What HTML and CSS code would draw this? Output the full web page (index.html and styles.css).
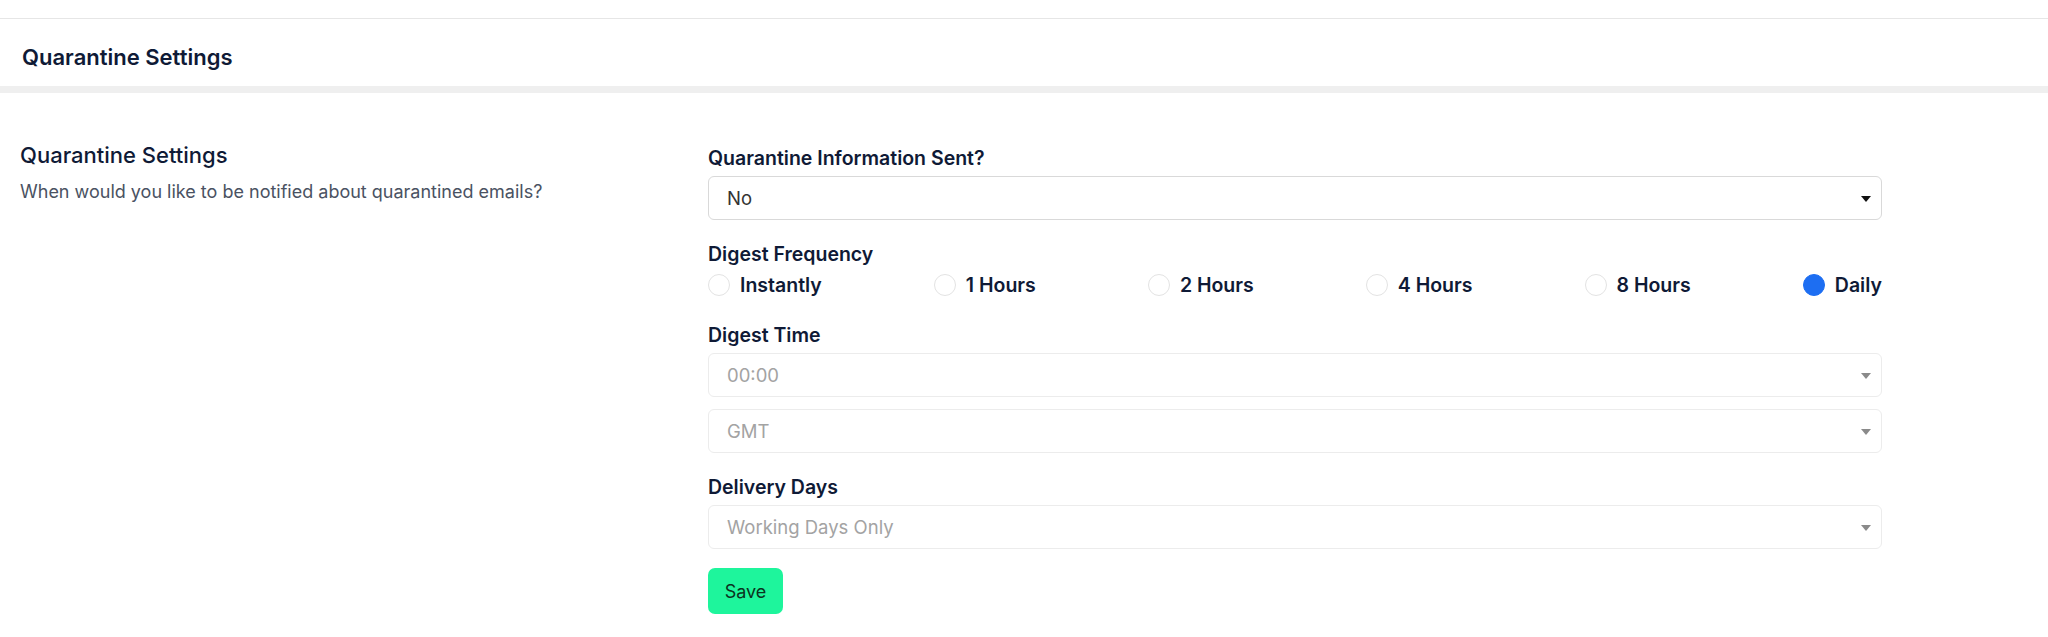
FILE: index.html
```html
<!DOCTYPE html>
<html lang="en">
<head>
  <meta charset="UTF-8" />
  <meta name="viewport" content="width=device-width, initial-scale=1" />
  <title>Quarantine Settings</title>
  <link rel="stylesheet" href="styles.css">
</head>
<body>

  <!-- Page header -->
  <div class="page-header">
    <h1>Quarantine Settings</h1>
  </div>

  <div class="content">
    <div class="intro">
      <h2>Quarantine Settings</h2>
      <p>When would you like to be notified about quarantined emails?</p>
    </div>

    <form class="settings-form">
      <div class="field">
        <label for="infoSent">Quarantine Information Sent?</label>
        <div class="select-wrap">
          <select id="infoSent">
            <option>No</option>
            <option>Yes</option>
          </select>
        </div>
      </div>

      <div class="field">
        <label>Digest Frequency</label>
        <div class="radio-row">
          <label class="radio"><input type="radio" name="freq" /> <span>Instantly</span></label>
          <label class="radio"><input type="radio" name="freq" /> <span>1 Hours</span></label>
          <label class="radio"><input type="radio" name="freq" /> <span>2 Hours</span></label>
          <label class="radio"><input type="radio" name="freq" /> <span>4 Hours</span></label>
          <label class="radio"><input type="radio" name="freq" /> <span>8 Hours</span></label>
          <label class="radio"><input type="radio" name="freq" checked /> <span>Daily</span></label>
        </div>
      </div>

      <div class="field">
        <label for="digestTime">Digest Time</label>
        <div class="select-wrap disabled">
          <select id="digestTime" disabled>
            <option>00:00</option>
          </select>
        </div>
        <div class="select-wrap disabled">
          <select id="timezone" disabled>
            <option>GMT</option>
          </select>
        </div>
      </div>

      <div class="field">
        <label for="deliveryDays">Delivery Days</label>
        <div class="select-wrap disabled">
          <select id="deliveryDays" disabled>
            <option>Working Days Only</option>
          </select>
        </div>
      </div>

      <button type="button" class="save-btn">Save</button>
    </form>
  </div>

</body>
</html>
```

FILE: styles.css
```css
body {
  margin: 0;
  padding-top: 18px;
  font-family: Inter, "Noto Sans", sans-serif;
  color: #0f1a36;
  background: #fff;
}

.page-header {
  border-top: 1px solid #e6e6e6;
  border-bottom: 7px solid #efefef;
  box-sizing: border-box;
  height: 75px;
  display: flex;
  align-items: center;
  padding: 9px 0 0 22px;
}
.page-header h1 {
  margin: 0;
  font-size: 22px;
  font-weight: 600;
}

.content {
  display: flex;
  padding: 48px 0 0 20px;
}

.intro {
  width: 688px;
}
.intro h2 {
  margin: 0;
  font-size: 22px;
  font-weight: 500;
  line-height: 28px;
}
.intro p {
  margin: 12px 0 0;
  font-size: 18px;
  line-height: 22px;
  color: #4a5262;
}

.settings-form {
  width: 1174px;
  padding-top: 4px;
}

.field {
  margin-bottom: 21px;
}
.field > label {
  display: block;
  font-size: 19.5px;
  font-weight: 600;
  line-height: 26px;
  margin-bottom: 5px;
}

.select-wrap {
  position: relative;
  margin-bottom: 12px;
}
.select-wrap:last-child {
  margin-bottom: 0;
}
.select-wrap::after {
  content: "";
  position: absolute;
  right: 11px;
  top: 20px;
  border-left: 5px solid transparent;
  border-right: 5px solid transparent;
  border-top: 6px solid #111;
  pointer-events: none;
}
.select-wrap.disabled::after {
  border-top-color: #8a8a8a;
}

select {
  appearance: none;
  -webkit-appearance: none;
  width: 100%;
  height: 44px;
  padding: 0 18px;
  font-family: Inter, "Noto Sans", sans-serif;
  font-size: 18.5px;
  color: #333;
  background: #fff;
  border: 1px solid #d9d9d9;
  border-radius: 6px;
}
select:disabled {
  color: #a3a3a3;
  border-color: #ececec;
  opacity: 1;
}

.radio-row {
  display: flex;
  justify-content: space-between;
  padding-bottom: 3px;
}
.radio {
  display: flex;
  align-items: center;
  gap: 10px;
  font-size: 19.5px;
  font-weight: 600;
  line-height: 26px;
}
.radio input {
  appearance: none;
  -webkit-appearance: none;
  margin: 0;
  width: 22px;
  height: 22px;
  border: 1px solid #e3e3e3;
  border-radius: 50%;
  background: #fff;
}
.radio input:checked {
  background: #1d6ef2;
  border-color: #1d6ef2;
}

.save-btn {
  margin-top: -2px;
  width: 75px;
  height: 46px;
  background: #1ef59c;
  color: #0b3320;
  font-family: Inter, "Noto Sans", sans-serif;
  font-size: 18px;
  border: none;
  border-radius: 7px;
}
```
